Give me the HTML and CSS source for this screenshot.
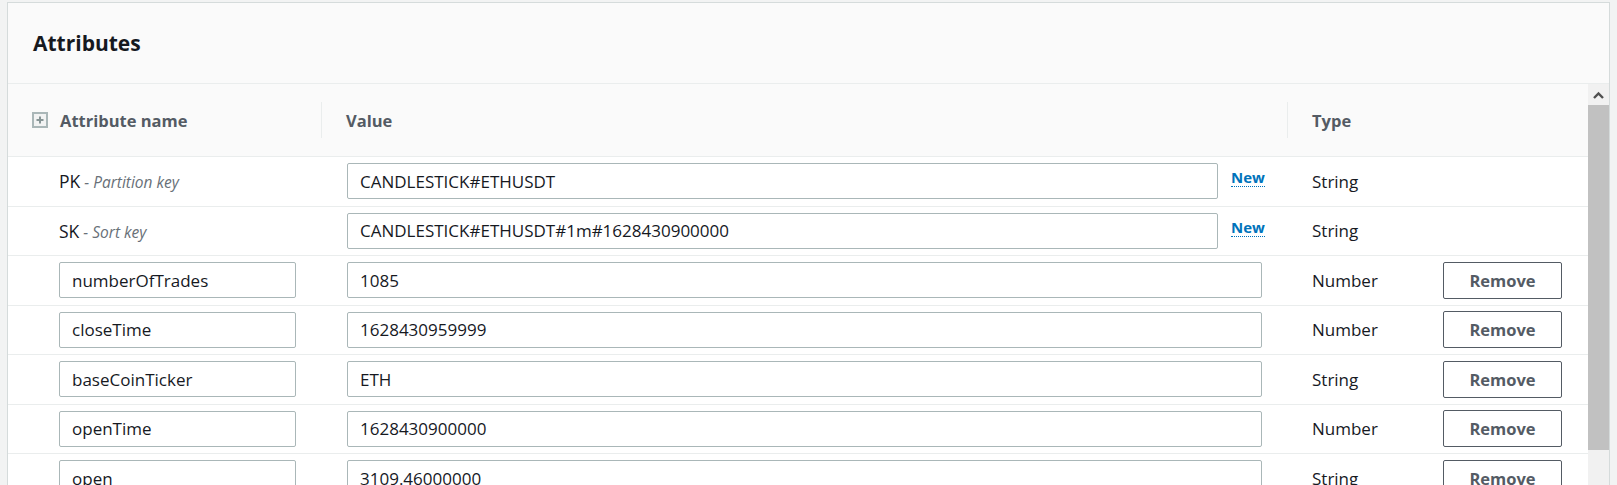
FILE: index.html
```html
<!DOCTYPE html>
<html lang="en">
<head>
<meta charset="utf-8">
<title>Attributes</title>
<link rel="stylesheet" href="styles.css">
</head>
<body>
<div class="card">
  <div class="card-header"><h2>Attributes</h2></div>
  <div class="card-body">
    <div class="table">
      <div class="row head">
        <div class="cell c1">
          <svg class="expand" width="16" height="16" viewBox="0 0 16 16"><rect x="1" y="1" width="14" height="14" fill="#f2f3f3" stroke="#aab7b8" stroke-width="2"/><path d="M8 4.5v7M4.5 8h7" stroke="#879596" stroke-width="2"/></svg>
          <span>Attribute name</span>
        </div>
        <div class="cell c2"><div class="th">Value</div></div>
        <div class="cell c3"><div class="th">Type</div></div>
      </div>

      <div class="row">
        <div class="cell c1"><span class="key">PK</span><span class="keyhint">&nbsp;- Partition key</span></div>
        <div class="cell c2"><input class="inp val short" value="CANDLESTICK#ETHUSDT"><a class="newlink">New</a></div>
        <div class="cell c3"><span class="type">String</span></div>
      </div>
      <div class="row">
        <div class="cell c1"><span class="key">SK</span><span class="keyhint">&nbsp;- Sort key</span></div>
        <div class="cell c2"><input class="inp val short" value="CANDLESTICK#ETHUSDT#1m#1628430900000"><a class="newlink">New</a></div>
        <div class="cell c3"><span class="type">String</span></div>
      </div>
      <div class="row">
        <div class="cell c1"><input class="inp name" value="numberOfTrades"></div>
        <div class="cell c2"><input class="inp val" value="1085"></div>
        <div class="cell c3"><span class="type">Number</span><button class="btn">Remove</button></div>
      </div>
      <div class="row">
        <div class="cell c1"><input class="inp name" value="closeTime"></div>
        <div class="cell c2"><input class="inp val" value="1628430959999"></div>
        <div class="cell c3"><span class="type">Number</span><button class="btn">Remove</button></div>
      </div>
      <div class="row">
        <div class="cell c1"><input class="inp name" value="baseCoinTicker"></div>
        <div class="cell c2"><input class="inp val" value="ETH"></div>
        <div class="cell c3"><span class="type">String</span><button class="btn">Remove</button></div>
      </div>
      <div class="row">
        <div class="cell c1"><input class="inp name" value="openTime"></div>
        <div class="cell c2"><input class="inp val" value="1628430900000"></div>
        <div class="cell c3"><span class="type">Number</span><button class="btn">Remove</button></div>
      </div>
      <div class="row">
        <div class="cell c1"><input class="inp name" value="open"></div>
        <div class="cell c2"><input class="inp val" value="3109.46000000"></div>
        <div class="cell c3"><span class="type">String</span><button class="btn">Remove</button></div>
      </div>
    </div>
    <div class="scrollbar">
      <div class="sb-btn"><svg width="11" height="8" viewBox="0 0 11 8"><path d="M1 7L5.5 2.5L10 7" fill="none" stroke="#505050" stroke-width="2.4"/></svg></div>
      <div class="sb-thumb"></div>
      <div class="sb-track"></div>
    </div>
  </div>
</div>
</body>
</html>
```

FILE: styles.css
```css
html, body {
  margin: 0;
  padding: 0;
}
body {
  background: #f2f3f3;
  font-family: "Open Sans", "Noto Sans", sans-serif;
  color: #16191f;
  font-size: 17px;
  overflow: hidden;
}
.card {
  margin: 2px 7px 0 7px;
  border: 1px solid #d5dbdb;
  border-bottom: none;
  background: #ffffff;
}
.card-header {
  height: 80px;
  background: #fafafa;
  border-bottom: 1px solid #eaeded;
  display: flex;
  align-items: center;
  padding-left: 25px;
}
.card-header h2 {
  margin: 0;
  font-size: 21px;
  font-weight: 700;
  color: #16191f;
}
.card-body {
  display: flex;
  height: 420px;
  overflow: hidden;
}
.table {
  flex: 1;
  display: flex;
  flex-direction: column;
}
.row {
  display: grid;
  grid-template-columns: 313px 966px 1fr;
  height: 49.5px;
  border-bottom: 1px solid #eaeded;
  box-sizing: border-box;
  flex-shrink: 0;
}
.row.head {
  height: 73px;
  background: #fafafa;
}
.cell {
  display: flex;
  align-items: center;
}
.head .cell {
  font-weight: 700;
  color: #545b64;
  font-size: 16.5px;
}
.head .c1 {
  padding-left: 24px;
}
.expand {
  margin-right: 12px;
  flex-shrink: 0;
}
.th {
  height: 36px;
  border-left: 1px solid #eaeded;
  display: flex;
  align-items: center;
  padding-left: 24px;
  flex: 1;
}
.c1 {
  padding-left: 51px;
}
.c2 {
  padding-left: 26px;
}
.c3 {
  padding-left: 25px;
}
.head .c2, .head .c3 {
  padding-left: 0;
}
.key {
  font-size: 17.5px;
}
.keyhint {
  font-style: italic;
  font-size: 15.5px;
  color: #687078;
  padding-top: 2px;
}
.inp {
  box-sizing: border-box;
  height: 36px;
  border: 1px solid #aab7b8;
  border-radius: 2px;
  padding: 0 12px;
  font-family: inherit;
  font-size: 17px;
  color: #16191f;
  background: #fff;
  outline: none;
}
.inp.name {
  width: 237px;
}
.inp.val {
  width: 915px;
}
.inp.val.short {
  width: 871px;
}
.newlink {
  margin-left: 13px;
  color: #0073bb;
  font-weight: 700;
  font-size: 15px;
  text-decoration: none;
  border-bottom: 1px dotted #0073bb;
  line-height: 17px;
  margin-top: -6px;
}
.type {
  width: 131px;
  flex-shrink: 0;
  font-size: 17px;
}
.btn {
  box-sizing: border-box;
  width: 119px;
  height: 37px;
  border: 1px solid #545b64;
  border-radius: 2px;
  background: #fff;
  color: #545b64;
  font-family: inherit;
  font-weight: 700;
  font-size: 16.5px;
  padding: 0;
}
.scrollbar {
  width: 21px;
  flex-shrink: 0;
  display: flex;
  flex-direction: column;
  background: #f1f1f1;
}
.sb-btn {
  flex: none;
  height: 21px;
  display: flex;
  align-items: center;
  justify-content: center;
  background: #f1f1f1;
}
.sb-thumb {
  flex: none;
  height: 345px;
  background: #c1c1c1;
}
.sb-track {
  flex: 1;
  background: #f1f1f1;
}
```
